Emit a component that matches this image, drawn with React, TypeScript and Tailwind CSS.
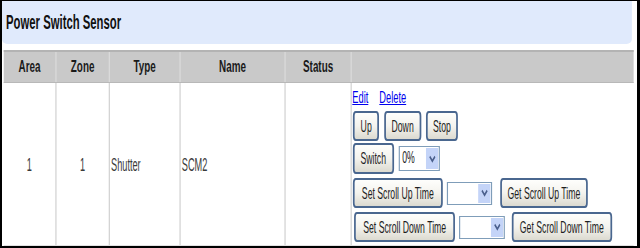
import React from "react";

function Btn({ className, children }: { className: string; children: React.ReactNode }) {
  return (
    <button
      type="button"
      className={
        "h-[30px] shrink-0 rounded-[5px] border-x-[3px] border-y-2 border-[#4a678f] bg-linear-to-b from-[#fefefc] via-[#f4f3ee] to-[#dcdad0] text-[17px] leading-none text-[#1e1e1e] flex items-center justify-center whitespace-nowrap " +
        className
      }
    >
      <span className="inline-block scale-x-[0.88]">{children}</span>
    </button>
  );
}

function Sel({ className, value }: { className: string; value?: string }) {
  return (
    <div
      className={
        "h-[23px] shrink-0 border-x-2 border-y border-[#7f9db9] bg-white flex items-stretch " + className
      }
    >
      <span className="flex-1 pl-[4px] text-[17px] leading-[21px] text-[#222]">
        <span className="inline-block origin-left scale-x-[0.88]">{value ?? ""}</span>
      </span>
      <span className="w-[21px] my-[1px] mr-[1px] bg-[#c4d4f8] flex items-center justify-center">
        <svg width="12" height="8" viewBox="0 0 12 8">
          <path d="M1.5 1.5 L6 6 L10.5 1.5" fill="none" stroke="#4a5f8c" strokeWidth="2.4" />
        </svg>
      </span>
    </div>
  );
}

export default function App() {
  const font = "font-['Liberation_Sans',Arial,sans-serif]";
  return (
    <div
      className={
        "w-[640px] h-[248px] overflow-hidden bg-white border-t border-l-2 border-r-[3px] border-b-2 border-black " + font
      }
    >
      <div className="w-[1095px] h-[245px] origin-top-left scale-x-[0.58]">
        {/* Title bar */}
        <div className="mr-[9px] h-[43px] bg-[#e0eafc] rounded-bl-[9px_5px] rounded-br-[9px_5px] flex items-center pl-[7px]">
          <span className="text-[19.5px] font-bold text-[#111]">Power Switch Sensor</span>
        </div>

        {/* Table */}
        <div className="mt-[6px] ml-[3px] w-[1086px]">
          <div className="flex h-[33px] bg-[#c9c9c9] border-t-2 border-t-[#b3b3b3] border-b border-b-[#b8b8b8] text-[17px] font-bold text-[#1a1a1a]">
            <div className="w-[91px] border-r-2 border-[#dcdcdc] flex items-center justify-center">Area</div>
            <div className="w-[92px] border-r-2 border-[#dcdcdc] flex items-center justify-center">Zone</div>
            <div className="w-[122px] border-r-2 border-[#dcdcdc] flex items-center justify-center">Type</div>
            <div className="w-[181px] border-r-2 border-[#dcdcdc] flex items-center justify-center">Name</div>
            <div className="w-[114px] border-r-2 border-[#dcdcdc] flex items-center justify-center">Status</div>
            <div className="w-[486px]"></div>
          </div>
          <div className="flex h-[163px] border-b border-[#e2e2e2] text-[18px] text-[#3a3a3a]">
            <div className="w-[91px] border-r-2 border-[#cfcfcf] flex items-center justify-center pt-[2px]">
              <span className="inline-block scale-x-[0.88]">1</span>
            </div>
            <div className="w-[92px] border-r-2 border-[#cfcfcf] flex items-center justify-center pt-[2px]">
              <span className="inline-block scale-x-[0.88]">1</span>
            </div>
            <div className="w-[122px] border-r-2 border-[#cfcfcf] flex items-center pl-[2px] pt-[2px]">
              <span className="inline-block origin-left scale-x-[0.88]">Shutter</span>
            </div>
            <div className="w-[181px] border-r-2 border-[#cfcfcf] flex items-center pl-[2px] pt-[2px]">
              <span className="inline-block origin-left scale-x-[0.88]">SCM2</span>
            </div>
            <div className="w-[114px] border-r-2 border-[#cfcfcf]"></div>
            <div className="w-[486px] pt-[6px] pl-[1px] flex flex-col">
              <div className="h-[18px] flex items-center text-[16px] leading-[18px]">
                <a href="#" className="text-[#0000ee] underline">Edit</a>
                <a href="#" className="ml-[19px] text-[#0000ee] underline">Delete</a>
              </div>
              <div className="mt-[4px] h-[30px] flex items-center pl-[1px]">
                <Btn className="w-[45px]">Up</Btn>
                <Btn className="ml-[9px] w-[64px]">Down</Btn>
                <Btn className="ml-[8px] w-[55px]">Stop</Btn>
              </div>
              <div className="mt-[2px] h-[31px] flex items-center pl-[1px]">
                <Btn className="w-[71px] h-[31px]">Switch</Btn>
                <Sel className="ml-[8px] w-[71px] h-[25px]" value="0%" />
              </div>
              <div className="mt-[4px] h-[30px] flex items-center pl-[1px]">
                <Btn className="w-[155px]">Set Scroll Up Time</Btn>
                <Sel className="ml-[7px] w-[78px]" />
                <Btn className="ml-[14px] w-[151px]">Get Scroll Up Time</Btn>
              </div>
              <div className="mt-[4px] h-[30px] flex items-center pl-[3px]">
                <Btn className="w-[174px]">Set Scroll Down Time</Btn>
                <Sel className="ml-[7px] w-[79px]" />
                <Btn className="ml-[12px] w-[173px]">Get Scroll Down Time</Btn>
              </div>
            </div>
          </div>
        </div>
      </div>
    </div>
  );
}
